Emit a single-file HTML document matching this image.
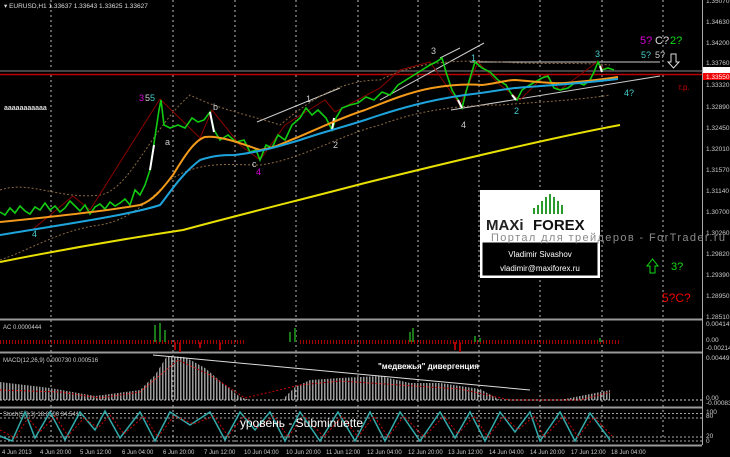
<!DOCTYPE html><html><head><style>body{margin:0;background:#000;}svg{display:block}text{font-family:"Liberation Sans",sans-serif}</style></head><body>
<svg width="730" height="457" xmlns="http://www.w3.org/2000/svg">
<defs><pattern id="vs" width="3" height="4" patternUnits="userSpaceOnUse"><rect width="1.5" height="4" fill="#9a9a9a"/></pattern></defs>
<rect width="730" height="457" fill="#000"/>
<g stroke="#bbb" stroke-dasharray="2,3" stroke-width="1">
<path d="M51 0V445M173 0V445M235 0V445M296 0V445M358 0V445M418 0V445M479 0V445M540 0V445M602 0V445M663 0V445"/>
</g>
<path d="M702.5 0V445" stroke="#aaa"/>
<path d="M0 319.5H702M0 352.5H702M0 407.5H702M0 445.5H702" stroke="#999" stroke-width="2"/>
<path d="M0 71H702" stroke="#444" stroke-width="2"/>
<path d="M0 74.5H702" stroke="#b00" stroke-width="1.5"/>
<g fill="#ccc" font-size="6.5">
<text x="706" y="3">1.35070</text><text x="706" y="24">1.34630</text><text x="706" y="45">1.34200</text><text x="706" y="65">1.33760</text><text x="706" y="87">1.33320</text><text x="706" y="109">1.32890</text><text x="706" y="130">1.32450</text><text x="706" y="151">1.32010</text><text x="706" y="172">1.31570</text><text x="706" y="193">1.31140</text><text x="706" y="214">1.30700</text><text x="706" y="235">1.30260</text><text x="706" y="256">1.29820</text><text x="706" y="277">1.29390</text><text x="706" y="298">1.28950</text><text x="706" y="319">1.28510</text>
<text x="706" y="326">0.004149</text><text x="706" y="342">0.00</text><text x="706" y="350">-0.002140</text>
<text x="706" y="360">0.004491</text><text x="706" y="400">0.00</text><text x="706" y="405">-0.000834</text>
<text x="706" y="414">100</text><text x="706" y="418">80</text><text x="706" y="438">20</text><text x="706" y="443">0</text>
</g>
<rect x="703" y="67" width="27" height="6" fill="#fff"/>
<rect x="703" y="73" width="27" height="7" fill="#e00"/>
<text x="706" y="79" fill="#fff" font-size="6.5">1.33550</text>
<text x="4" y="8" fill="#ddd" font-size="6.5">▾ EURUSD,H1  1.33637 1.33643 1.33625 1.33627</text>
<text x="4" y="110" fill="#ddd" font-size="7" font-weight="bold">ааааааааааа</text>
<g stroke="#ccc" stroke-width="1" fill="none">
<path d="M257 122L340 88M380 100L484 43M451 110L660 76M470 62L660 62M440 58L460 48"/>
</g>
<g stroke="#8a6a40" stroke-dasharray="2,2" fill="none">
<path d="M0 190C30 180 60 200 100 195C130 190 150 130 190 95C220 110 250 115 280 125C310 100 340 80 380 80C420 60 460 60 500 62C540 65 580 62 610 65"/>
<path d="M0 260C30 250 60 230 100 225C130 220 150 200 170 180C200 160 230 165 260 165C300 160 340 135 380 125C420 110 460 105 500 105C540 102 580 100 610 95"/>
</g>
<path d="M32 230L73 196L90 210L160 99L200 138L212 110L240 145L260 160L285 125L325 100L335 112L380 88L400 70L430 62L460 105L478 62L500 85L520 100L545 75L560 90L597 62L605 70" stroke="#8b0000" fill="none"/>
<!-- price -->
<g stroke="#1c1" stroke-width="1.6" fill="none">
<path d="M0 212L5 215L10 208L15 213L20 206L25 211L30 214L35 207L40 210L45 203L50 210L55 206L60 212L65 208L70 201L75 206L80 211L85 205L90 214L95 207L100 204L105 209L110 202L115 206L120 203L125 199L130 205L135 190L140 195L145 185L150 170L153 150L156 130L159 110L161 100L164 125L170 128L178 125L185 128L192 118L198 122L204 120L210 112L214 130L220 140L228 135L236 142L244 140L250 152L256 150L260 160L266 145L272 148L278 135L285 140L292 125L300 118L306 108L312 115L318 110L326 118L332 130L336 118L342 108L350 105L358 103L366 97L374 100L382 92L390 95L398 85L406 80L414 75L422 70L430 65L436 62L442 58L446 72L452 90L458 100L462 108L466 92L470 78L475 62L482 68L490 72L498 80L506 85L512 95L517 100L522 90L528 86L535 82L542 78L548 76L554 88L560 90L568 88L576 82L584 85L590 80L594 72L598 62L602 70L608 68L614 70"/>
</g>
<path d="M150 170L154 145M210 112L214 132M332 130L334 118M458 100L462 108M512 95L516 100M600 66L602 72" stroke="#fff" stroke-width="2"/>
<!-- MAs -->
<path d="M0 222C40 218 100 212 140 205C155 200 165 185 173 175C185 155 195 140 205 137C220 135 245 145 260 150C275 148 285 142 296 138C320 128 340 118 365 110C390 100 410 92 432 88C455 84 470 84 482 85C495 84 505 80 515 80C540 82 555 84 565 83C590 81 605 79 618 77" stroke="#f39a1a" stroke-width="2" fill="none"/>
<path d="M0 235C60 225 130 215 160 205C167 197 180 175 200 160C215 155 225 155 235 155C260 152 280 146 300 140C320 133 340 128 365 120C400 108 430 100 465 95C490 92 505 89 515 88C540 86 570 84 590 82L618 79" stroke="#1ea4dc" stroke-width="2" fill="none"/>
<path d="M0 262C60 250 130 238 183 230C250 212 300 200 365 183C450 162 550 138 620 125" stroke="#e8e000" stroke-width="2" fill="none"/>
<g font-size="9">
<text x="139" y="101" fill="#d0d">3</text><text x="145" y="101" fill="#ccc">5</text><text x="150" y="101" fill="#4cc">5</text>
<text x="165" y="145" fill="#ccc">a</text><text x="213" y="110" fill="#ccc">b</text><text x="252" y="167" fill="#ccc">c</text><text x="256" y="175" fill="#d0d">4</text>
<text x="306" y="102" fill="#ccc">1</text><text x="333" y="148" fill="#ccc">2</text><text x="431" y="54" fill="#ccc">3</text><text x="461" y="128" fill="#ccc">4</text>
<text x="471" y="61" fill="#4cc">1</text><text x="514" y="114" fill="#4cc">2</text><text x="595" y="57" fill="#4cc">3</text><text x="624" y="96" fill="#4cc">4?</text>
<text x="32" y="237" fill="#4cc">4</text>
<text x="640" y="44" fill="#d0d" font-size="11">5?</text><text x="655" y="44" fill="#ddd" font-size="11">C?</text><text x="670" y="44" fill="#1d1" font-size="11">2?</text>
<text x="641" y="58" fill="#4cc">5?</text><text x="655" y="58" fill="#ccc">5?</text>
<text x="678" y="90" fill="#c00" font-size="8">т.р.</text>
<text x="671" y="270" fill="#1d1" font-size="11">3?</text>
<text x="662" y="302" fill="#e00" font-size="12">5?C?</text>
</g>
<path d="M671 54h5v8h3l-5.5 6l-5.5-6h3z" fill="none" stroke="#ddd"/>
<path d="M655 273h-5v-7h-3l5.5-7l5.5 7h-3z" fill="none" stroke="#1d1"/>
<!-- logo -->
<rect x="480" y="190" width="120" height="88" fill="#fff"/>
<g fill="#2a9a2a"><rect x="533" y="208" width="2" height="6"/><rect x="537" y="205" width="2" height="9"/><rect x="541" y="201" width="2" height="13"/><rect x="545" y="197" width="2" height="17"/><rect x="549" y="194" width="2" height="20"/><rect x="553" y="197" width="2" height="17"/><rect x="557" y="201" width="2" height="13"/><rect x="561" y="205" width="2" height="9"/></g>
<text x="486" y="230" font-size="15" font-weight="bold" fill="#222">MAXi</text>
<text x="533" y="230" font-size="15" font-weight="bold" fill="#111">FOREX</text>
<rect x="482" y="242" width="116" height="34" fill="#000" stroke="#fff"/>
<text x="540" y="257" font-size="8" fill="#fff" text-anchor="middle">Vladimir Sivashov</text>
<text x="540" y="271" font-size="8" fill="#fff" text-anchor="middle">vladimir@maxiforex.ru</text>
<text x="491" y="241" font-size="11" fill="#8a8a8a" textLength="234">Портал для трейдеров - ForTrader.ru</text>
<!-- AC -->
<text x="3" y="329" fill="#ccc" font-size="6">AC 0.0000444</text>
<path d="M0 342H245M300 342H620" stroke="#a00" stroke-dasharray="1,2" stroke-width="4"/>
<path d="M155 342V325M160 342V323M165 342V330M290 342V332M295 342V328M410 342V332M413 342V328M475 342V336M480 342V338M600 342V338" stroke="#1a7a1a" stroke-width="2"/>
<path d="M175 342V350M180 342V352M200 342V348M220 342V350M455 342V350M460 342V352" stroke="#a00" stroke-width="2"/>
<!-- MACD -->
<text x="3" y="362" fill="#ccc" font-size="6">MACD(12,26,9) 0.000730 0.000516</text>
<path d="M0 382L50 388L95 396L140 390L155 375L167 356L185 357L205 368L225 385L240 397L250 400L282 400L295 387L310 380L340 378L380 376L410 383L440 383L480 389L500 400L560 400L580 396L610 390L610 400L0 400Z" fill="url(#vs)"/>
<path d="M153 355L530 390" stroke="#ddd"/>
<path d="M0 390L60 392L100 398L140 392L178 360L210 375L245 398L300 385L340 381L400 385L460 389L510 400L580 400L610 392" stroke="#c00" stroke-dasharray="2,2" fill="none"/>
<text x="378" y="369" fill="#fff" font-size="8" font-weight="bold">"медвежья" дивергенция</text>
<path d="M0 400H702" stroke="#ccc" stroke-dasharray="2,2"/>
<!-- Stoch -->
<text x="3" y="416" fill="#ccc" font-size="6">Stoch(5,3,3) 18.8500 34.5411</text>
<path d="M0 413.5H702M0 418H702M0 437H702M0 441H702" stroke="#aaa" stroke-dasharray="2,2"/>
<path d="M0 436L12 441L25 412L35 438L50 412L65 440L80 412L95 430L105 411L120 438L140 412L155 441L170 412L190 425L210 412L225 440L240 412L255 430L270 412L285 441L300 412L320 441L338 412L355 441L370 412L385 441L400 412L420 441L440 412L455 438L470 412L485 441L500 412L515 432L530 412L540 441L560 412L575 441L590 413L610 440" stroke="#3aa" stroke-width="1.5" fill="none"/>
<path d="M0 430L15 438L28 418L40 432L55 416L68 436L84 418L98 428L110 415L124 434L144 416L158 437L174 416L194 424L214 416L228 436L244 416L258 428L274 416L288 437L304 416L324 437L342 416L358 437L374 416L388 437L404 416L424 437L444 416L458 434L474 416L488 437L504 416L518 430L534 416L544 437L564 416L578 437L594 417L612 436" stroke="#c00" stroke-dasharray="2,2" fill="none"/>
<text x="240" y="427" fill="#fff" font-size="12">уровень - Subminuette</text>
<g fill="#ccc" font-size="6">
<text x="2" y="454">4 Jun 2013</text><text x="40" y="454">4 Jun 20:00</text><text x="80" y="454">5 Jun 12:00</text><text x="122" y="454">6 Jun 04:00</text><text x="163" y="454">6 Jun 20:00</text><text x="204" y="454">7 Jun 12:00</text><text x="244" y="454">10 Jun 04:00</text><text x="286" y="454">10 Jun 20:00</text><text x="326" y="454">11 Jun 12:00</text><text x="367" y="454">12 Jun 04:00</text><text x="408" y="454">12 Jun 20:00</text><text x="448" y="454">13 Jun 12:00</text><text x="489" y="454">14 Jun 04:00</text><text x="530" y="454">14 Jun 20:00</text><text x="571" y="454">17 Jun 12:00</text><text x="611" y="454">18 Jun 04:00</text>
</g>
</svg></body></html>
